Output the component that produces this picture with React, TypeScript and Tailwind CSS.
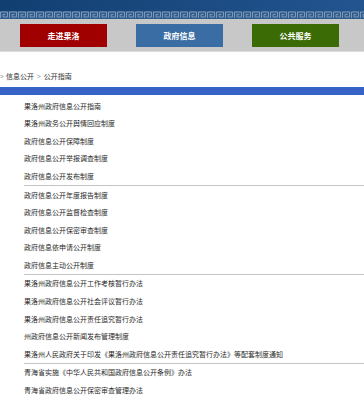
import React from "react";

const groups: string[][] = [
  [
    "果洛州政府信息公开指南",
    "果洛州政务公开舆情回应制度",
    "政府信息公开保障制度",
    "政府信息公开举报调查制度",
    "政府信息公开发布制度",
  ],
  [
    "政府信息公开年度报告制度",
    "政府信息公开监督检查制度",
    "政府信息公开保密审查制度",
    "政府信息依申请公开制度",
    "政府信息主动公开制度",
  ],
  [
    "果洛州政府信息公开工作考核暂行办法",
    "果洛州政府信息公开社会评议暂行办法",
    "果洛州政府信息公开责任追究暂行办法",
    "州政府信息公开新闻发布管理制度",
    "果洛州人民政府关于印发《果洛州政府信息公开责任追究暂行办法》等配套制度通知",
  ],
  ["青海省实施《中华人民共和国政府信息公开条例》办法", "青海省政府信息公开保密审查管理办法"],
];

function KeyBand() {
  return (
    <svg width="364" height="8" className="block">
      <defs>
        <pattern id="key" width="9" height="8" patternUnits="userSpaceOnUse">
          <rect width="9" height="8" fill="#2f5b8c" />
          <path
            d="M0.5 7 V1 H7.5 V6 H3 V3.5 H5.5"
            fill="none"
            stroke="#7d99b8"
            strokeWidth="1"
          />
        </pattern>
      </defs>
      <rect width="364" height="8" fill="url(#key)" />
    </svg>
  );
}

function App() {
  return (
    <div
      className="w-[364px] h-[404px] overflow-hidden bg-white"
      style={{ fontFamily: '"Noto Sans CJK SC", "Noto Sans", sans-serif' }}
    >
      <div className="h-[11px] bg-gradient-to-r from-[#123f72] via-[#1a4a80] to-[#245490]" />
      <KeyBand />
      <div className="h-[33px] bg-[#c8c8c8] flex items-start pt-[5px] pl-[20px] gap-[29px] border-b border-[#dcdcdc]">
        <div className="w-[87px] h-[23px] bg-[#a10000] text-white text-[8px] font-bold flex items-center justify-center">
          走进果洛
        </div>
        <div className="w-[87px] h-[23px] bg-[#3a6da3] text-white text-[8px] font-bold flex items-center justify-center">
          政府信息
        </div>
        <div className="w-[87px] h-[23px] bg-[#3b6b05] text-white text-[8px] font-bold flex items-center justify-center">
          公共服务
        </div>
      </div>

      <div className="h-[35px] flex items-end pb-[6px] text-[7px] text-[#333]">
        <span className="text-[#999] mr-[2px]">&gt;</span>
        <span>信息公开</span>
        <span className="text-[#999] mx-[3px]">&gt;</span>
        <span>公开指南</span>
      </div>

      <div className="h-[8px] bg-[#3763c7]" />

      <div className="pt-[2px]">
        {groups.map((g, gi) => (
          <div key={gi}>
            {gi > 0 && <div className="ml-[24px] h-[1px] bg-[#c4c4c4]" />}
            {g.map((t) => (
              <div
                key={t}
                className="h-[17.6px] pl-[24px] flex items-center text-[7px] text-[#2a2a2a] whitespace-nowrap"
              >
                {t}
              </div>
            ))}
          </div>
        ))}
      </div>
    </div>
  );
}

export default App;
